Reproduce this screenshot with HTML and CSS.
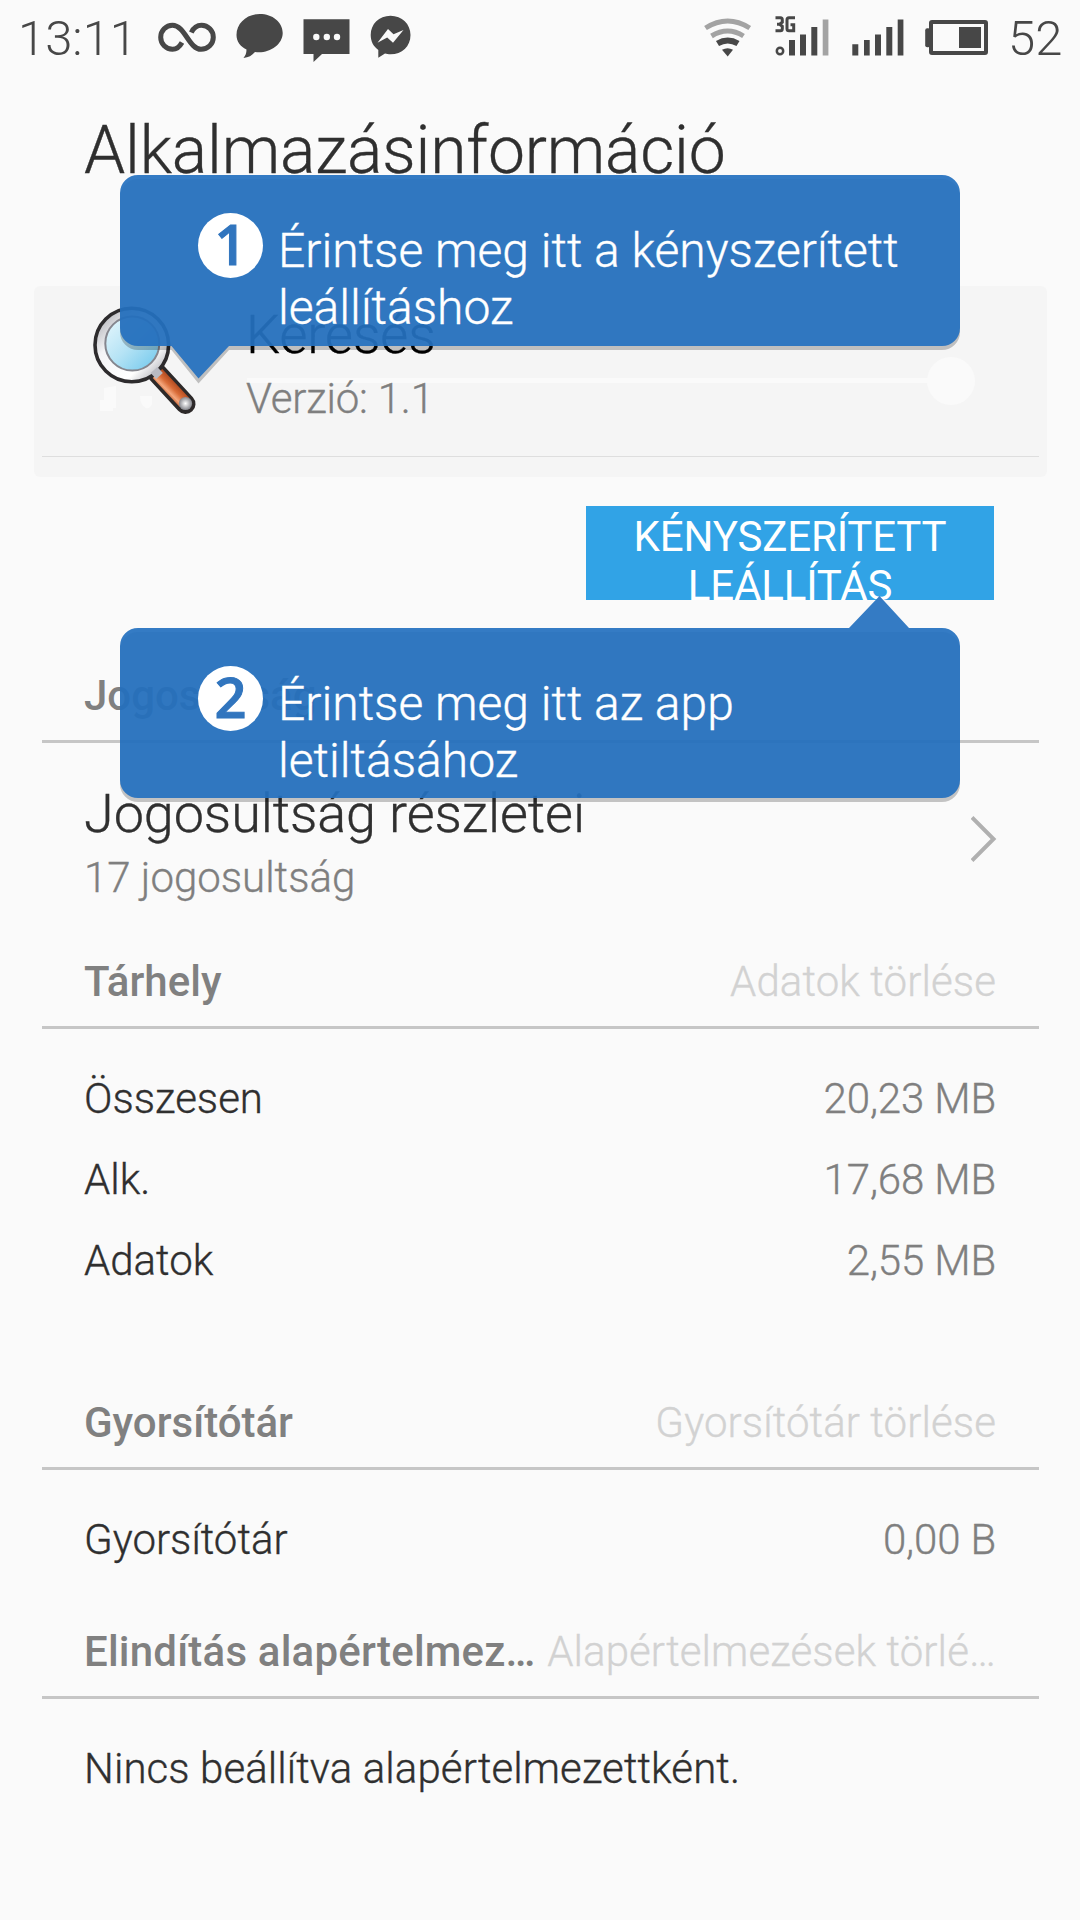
FILE: index.html
```html
<!DOCTYPE html>
<html lang="hu">
<head>
<meta charset="utf-8">
<title>Alkalmazásinformáció</title>
<link rel="stylesheet" href="styles.css">
</head>
<body>
<header class="status">
  <span class="status-time">13:11</span>
  <svg class="status-notes" width="256" height="66" viewBox="156 0 256 66">
    <g fill="none" stroke="#474747" stroke-width="5">
      <path d="M182 42.5C179.500 47 176 49.300 172.500 49.300C166 49.300 160.700 44 160.700 37.300C160.700 30.600 166 25.300 172.500 25.300C185 25.300 189 49.300 201 49.300C208 49.300 213.300 44 213.300 37.300C213.300 30.600 208 25.300 201.500 25.300C197 25.300 193.500 28 191.300 32.500"/>
    </g>
    <g fill="#474747">
      <path d="M259.700 14C272.500 14 282.700 22 282.700 33C282.700 44 271 52.300 259 52.300C257.500 52.300 256.500 52.300 255 52C252 55.500 248.500 57.500 243.500 58C245.500 55.500 246.500 53 246.500 49.500C240 46.500 236.500 41 236.500 35C236.500 23 247 14 259.700 14Z"/>
      <path d="M303.500 19.300H349.500V54H322L313.500 62V54H303.500Z"/>
      <path d="M390.500 15.700C402 15.700 410.500 24 410.500 35C410.500 46.500 402 54.300 390.500 54.300C388.500 54.300 386.500 54 385 53.500L378.300 57.700V50C373.500 46.500 370.700 41.500 370.700 35C370.700 24 379 15.700 390.500 15.700Z"/>
    </g>
    <g fill="#fafafa">
      <circle cx="316.300" cy="37" r="3.200"/><circle cx="326.800" cy="37" r="3.200"/><circle cx="337" cy="37" r="3.200"/>
      <path d="M377.500 42.700L388 29L393.500 34.300L403.500 30L393 42.700L387.200 37.500Z"/>
    </g>
  </svg>
  <svg class="status-signal" width="286" height="66" viewBox="702 0 286 66">
    <g fill="none" stroke="#a3a3a3" stroke-width="5">
      <path d="M705.500 28Q727.700 14 749.700 28"/>
      <path d="M711.500 36Q727.700 26 743.500 36"/>
      <path d="M717.500 43.500Q727.700 37.500 738 43.500" stroke="#474747" stroke-width="6"/>
    </g>
    <path fill="#474747" d="M722 49.800Q727.700 46.500 733 49.800L727.700 56.500Z"/>
    <g fill="none" stroke="#474747" stroke-width="3">
      <path d="M775.500 17.800H780.500Q782.300 17.800 782.300 20V22.300L779.500 24.300L782.300 26.300V28.700Q782.300 30.700 780.500 30.700H775.500M777 24.300H780"/>
      <path d="M795 17.800H789Q787 17.800 787 20V28.700Q787 30.700 789 30.700H793.700V24.800H790.500"/>
      <circle cx="780" cy="51" r="3.200" stroke-width="2.500"/>
    </g>
    <g fill="#474747">
      <path d="M789 40h6v15.500h-6zM800 34.500h6v21h-6zM811.300 27h6v28.500h-6z"/>
      <path fill="#a3a3a3" d="M822.700 19.500h5.700v36h-5.700z"/>
      <path d="M852.300 44.300h6v11.200h-6zM864 40h5.700v15.500h-5.700zM875 34.500h6v21h-6zM886.300 27h6v28.500h-6zM897.700 19.500h5.700v36h-5.700z"/>
      <rect x="925.200" y="28.200" width="5" height="19" rx="2"/>
      <rect x="959" y="27" width="22" height="21"/>
    </g>
    <rect x="931" y="22" width="55" height="31" rx="1" fill="none" stroke="#474747" stroke-width="4"/>
  </svg>
  <span class="status-battery">52</span>
</header>

<main>
  <h1 class="title">Alkalmazásinformáció</h1>

  <section class="app">
    <span class="slider"></span>
    <div class="app-row">
      <svg class="app-icon" width="110" height="124" viewBox="90 300 110 124">
        <defs>
          <linearGradient id="glass" x1="0" y1="0" x2="1" y2="1"><stop offset="0" stop-color="#e9f8fd"/><stop offset=".5" stop-color="#b5e3f5"/><stop offset="1" stop-color="#6cc6ec"/></linearGradient>
          <linearGradient id="rim" x1="0" y1="0" x2="1" y2="1"><stop offset="0" stop-color="#9b9ca3"/><stop offset=".35" stop-color="#f4f4f6"/><stop offset=".7" stop-color="#ffffff"/><stop offset="1" stop-color="#8d8e98"/></linearGradient>
          <linearGradient id="grip" gradientUnits="userSpaceOnUse" x1="177" y1="382" x2="165" y2="394"><stop offset="0" stop-color="#a8431b"/><stop offset=".45" stop-color="#d96c38"/><stop offset=".75" stop-color="#f4a77d"/><stop offset="1" stop-color="#c25a2b"/></linearGradient>
          <radialGradient id="cap"><stop offset="0" stop-color="#ffffff"/><stop offset="1" stop-color="#85868d"/></radialGradient>
        </defs>
        <g fill="#fafafa"><path d="M104 388l12-2v22h-3v3h-13v-11h4z"/><path d="M140 396h12v8q-2 5-6 4q-6-3-6-12z"/></g>
        <path d="M157 373L185.500 404" stroke="#2d2929" stroke-width="20" stroke-linecap="round"/>
        <circle cx="131.800" cy="345" r="36.800" fill="url(#rim)" stroke="#2d2b2d" stroke-width="3.600"/>
        <circle cx="132.300" cy="343.500" r="27" fill="url(#glass)" stroke="#85868e" stroke-width="2"/>
        <path d="M157.500 373.500L184.500 402.500" stroke="url(#grip)" stroke-width="13"/>
        <path d="M154 370L159.500 376" stroke="#b9bac2" stroke-width="9"/>
        <circle cx="185.500" cy="403.500" r="6.600" fill="url(#cap)"/>
      </svg>
      <div class="app-text">
        <div class="app-name">Keresés</div>
        <div class="sub">Verzió: 1.1</div>
      </div>
    </div>
    <div class="app-line"></div>
  </section>

  <button class="stop">KÉNYSZERÍTETT LEÁLLÍTÁS</button>

  <section class="perm-block">
    <h2 class="heading"><span>Jogosultság</span></h2>
    <div class="perm">
      <div>
        <div class="perm-name">Jogosultság részletei</div>
        <div class="sub">17 jogosultság</div>
      </div>
      <svg class="chevron" width="26" height="48" viewBox="0 0 26 48"><path d="M1 2.500L22.500 24L1 45.500" fill="none" stroke="#b0b0b0" stroke-width="4"/></svg>
    </div>
  </section>

  <section class="storage">
    <h2 class="heading"><span>Tárhely</span><span class="action">Adatok törlése</span></h2>
    <dl class="rows">
      <div class="row"><dt>Összesen</dt><dd>20,23 MB</dd></div>
      <div class="row"><dt>Alk.</dt><dd>17,68 MB</dd></div>
      <div class="row"><dt>Adatok</dt><dd>2,55 MB</dd></div>
    </dl>
  </section>

  <section class="cache">
    <h2 class="heading"><span>Gyorsítótár</span><span class="action">Gyorsítótár törlése</span></h2>
    <dl class="rows">
      <div class="row"><dt>Gyorsítótár</dt><dd>0,00 B</dd></div>
    </dl>
  </section>

  <section>
    <h2 class="heading"><span class="wide">Elindítás alapértelmez…</span><span class="action">Alapértelmezések törlé…</span></h2>
    <p class="rows note">Nincs beállítva alapértelmezettként.</p>
  </section>
</main>

<aside class="tip tip-first">
  <svg class="tip-shape" width="844" height="215" viewBox="0 0 844 215">
    <path class="tip-shadow" d="M18 4H822A18 18 0 0 1 840 22V157A18 18 0 0 1 822 175H109L78.500 208.500L51.500 175H18A18 18 0 0 1 0 157V22A18 18 0 0 1 18 4Z"/>
    <path class="tip-fill" d="M18 0H822A18 18 0 0 1 840 18V153A18 18 0 0 1 822 171H109L78.500 203.500L51.500 171H18A18 18 0 0 1 0 153V18A18 18 0 0 1 18 0Z"/>
  </svg>
  <span class="tip-num">1</span>
  <p class="tip-text">Érintse meg itt a kényszerített<br>leállításhoz</p>
</aside>
<aside class="tip tip-second">
  <svg class="tip-shape" width="844" height="210" viewBox="0 -33 844 210">
    <path class="tip-shadow" d="M18 4H822A18 18 0 0 1 840 22V156A18 18 0 0 1 822 174H18A18 18 0 0 1 0 156V22A18 18 0 0 1 18 4Z"/>
    <path class="tip-fill" d="M18 0H729L759.500 -32L789 0H822A18 18 0 0 1 840 18V152A18 18 0 0 1 822 170H18A18 18 0 0 1 0 152V18A18 18 0 0 1 18 0Z"/>
  </svg>
  <span class="tip-num">2</span>
  <p class="tip-text">Érintse meg itt az app<br>letiltásához</p>
</aside>
</body>
</html>
```
FILE: styles.css
```css
* { box-sizing: border-box; margin: 0; padding: 0; }

body {
  position: relative;
  width: 1080px;
  height: 1920px;
  overflow: hidden;
  background: #fafafa;
  color: #2f2f2f;
  font: 300 42px/50px Roboto, sans-serif;
  -webkit-text-stroke: 0.35px currentColor;
}

.status {
  display: flex;
  height: 80px;
  padding: 0 17px 0 18px;
  color: #474747;
  font-size: 49px;
  line-height: 78px;
  -webkit-text-stroke: 0;
}
.status-time { width: 138px; }
.status-signal { margin-left: auto; }
.status-battery { width: 55px; margin-left: 20px; }

.title {
  height: 206px;
  padding: 32px 84px 0;
  font-size: 66px;
  font-weight: 300;
  line-height: 78px;
  letter-spacing: -0.2px;
}

.app {
  position: relative;
  height: 191px;
  margin: 0 33px 0 34px;
  padding-top: 14px;
  border-radius: 6px;
  background: #f5f5f5;
}
.app-row { position: relative; display: flex; height: 140px; }
.app-icon { margin-left: 56px; }
.app-text { margin-left: 46px; padding-top: 3px; }
.app-name { margin-bottom: 7px; color: #000; font-size: 54px; line-height: 64px; }
.sub { color: #7f7f7f; }
.app-text .sub { letter-spacing: -0.2px; }
.app-line { height: 1px; margin: 16px 8px 0; background: #dedede; }
/* faint volume slider lying under the app details */
.slider {
  position: absolute;
  top: 92px;
  left: 213px;
  width: 700px;
  height: 5px;
  background: #fafafa;
}
.slider::after {
  content: "";
  position: absolute;
  top: -21px;
  right: -28px;
  width: 48px;
  height: 48px;
  border-radius: 50%;
  background: #fafafa;
}

.stop {
  display: flex;
  align-items: flex-start;
  justify-content: center;
  width: 408px;
  height: 94px;
  margin: 29px 86px 71px auto;
  padding: 6px 40px 0;
  overflow: hidden;
  border: 0;
  background: #31a3e6;
  color: #fff;
  font: 400 42px/49px Roboto, sans-serif;
  letter-spacing: -0.15px;
  text-align: center;
  -webkit-text-stroke: 0;
}

.heading {
  display: flex;
  justify-content: space-between;
  height: 72px;
  margin: 0 41px 0 42px;
  padding: 0 43px 0 42px;
  border-bottom: 3px solid #c6c6c6;
  color: #808080;
  font-size: 42px;
  font-weight: 500;
  white-space: nowrap;
  -webkit-text-stroke: 0;
}
.action {
  color: #d2d2d2;
  font-weight: 300;
  letter-spacing: 0.1px;
  -webkit-text-stroke: 0.35px currentColor;
}
.wide { letter-spacing: 0.2px; }

.perm {
  display: flex;
  justify-content: space-between;
  height: 214px;
  padding: 39px 83px 0 84px;
}
.perm-name { margin-bottom: 7px; font-size: 54px; line-height: 64px; letter-spacing: -0.1px; }
.chevron { margin-top: 33px; }

.rows { padding: 45px 84px 0; }
.row { display: flex; justify-content: space-between; }
.row + .row { margin-top: 31px; }
.row dd { color: #7f7f7f; letter-spacing: -0.15px; }
.storage { height: 441px; }
.cache { height: 229px; }
.note { letter-spacing: 0.08px; }

.tip {
  position: absolute;
  left: 120px;
  display: flex;
  width: 840px;
  padding-left: 78px;
  color: #fff;
}
.tip-first { top: 175px; height: 171px; }
.tip-second { top: 628px; height: 170px; }
.tip-shape { position: absolute; top: 0; left: 0; }
.tip-second .tip-shape { top: -33px; }
.tip-fill { fill: rgba(37, 113, 191, 0.93); }
.tip-shadow { fill: rgba(0, 0, 0, 0.22); }
.tip-num {
  position: relative;
  width: 65px;
  height: 65px;
  margin-top: 38px;
  border-radius: 50%;
  background: #fff;
  color: #3175be;
  font: 600 56px/61px "Open Sans", sans-serif;
  text-align: center;
  -webkit-text-stroke: 1px currentColor;
}
.tip-text {
  position: relative;
  margin: 47px 0 0 15px;
  font-size: 48px;
  line-height: 57px;
  white-space: nowrap;
}
```
